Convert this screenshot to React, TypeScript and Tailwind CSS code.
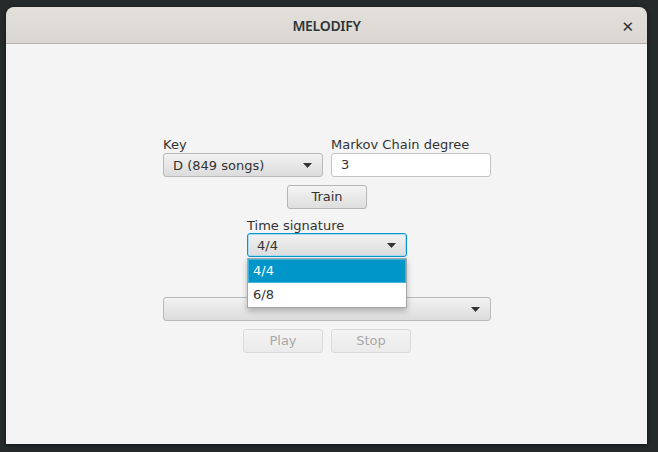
import React from "react";

const font = { fontFamily: '"DejaVu Sans", "Noto Sans", sans-serif' };

function Arrow() {
  return (
    <svg width="9" height="5" viewBox="0 0 9 5" className="shrink-0">
      <path d="M0 0 L9 0 L4.5 5 Z" fill="#333333" />
    </svg>
  );
}

function Combo({ text, width, focused }: { text?: string; width: string; focused?: boolean }) {
  return (
    <div
      className={`${width} h-[24px] flex items-center justify-between pl-[9px] pr-[10px] rounded-[3px] border bg-gradient-to-b from-[#f2f2f2] to-[#dcdcdc] ${
        focused ? "border-[#0596d0] shadow-[inset_0_0_0_1px_#a9dcef]" : "border-[#b9b9b9]"
      }`}
    >
      <span className="text-[13px] text-[#333333] leading-none">{text}</span>
      <Arrow />
    </div>
  );
}

function Button({ text, disabled }: { text: string; disabled?: boolean }) {
  return (
    <div
      className={`w-[80px] h-[24px] flex items-center justify-center rounded-[3px] border border-[#b5b5b5] bg-gradient-to-b from-[#f4f4f4] to-[#dedede] text-[13px] text-[#333333] ${
        disabled ? "opacity-40" : ""
      }`}
    >
      {text}
    </div>
  );
}

export default function App() {
  return (
    <div className="w-[658px] h-[452px] bg-[#252a2b] pt-[7px] pl-[6px]" style={font}>
      <div className="w-[641px] h-[437px] rounded-t-[8px] overflow-hidden flex flex-col shadow-[0_1px_4px_rgba(0,0,0,0.5)]">
        <div className="h-[37px] shrink-0 bg-gradient-to-b from-[#e3e0dc] to-[#dad6d1] border-b border-[#b6b0aa] relative flex items-center justify-center">
          <span className="text-[14px] font-semibold text-[#2e3436] tracking-[-0.3px]" style={{ fontFamily: '"Noto Sans", sans-serif' }}>
            MELODIFY
          </span>
          <span className="absolute right-[13px] top-[9px] text-[15px] font-bold text-[#2e3436]">✕</span>
        </div>
        <div className="flex-1 bg-[#f4f4f4] flex flex-col items-center pt-[93px] pl-[1px]">
          <div className="flex gap-[8px]">
            <div className="w-[160px] flex flex-col">
              <div className="h-[16px] text-[13px] leading-[15px] text-[#333333]">Key</div>
              <Combo text="D (849 songs)" width="w-[160px]" />
            </div>
            <div className="w-[160px] flex flex-col">
              <div className="h-[16px] text-[13px] leading-[15px] text-[#333333]">Markov Chain degree</div>
              <div className="w-[160px] h-[24px] flex items-center pl-[9px] rounded-[3px] border border-[#c4c4c4] bg-white text-[13px] text-[#333333]">
                3
              </div>
            </div>
          </div>
          <div className="mt-[8px]">
            <Button text="Train" />
          </div>
          <div className="mt-[9px] w-[160px] flex flex-col relative">
            <div className="h-[15px] text-[13px] leading-[15px] text-[#333333]">Time signature</div>
            <Combo text="4/4" width="w-[160px]" focused />
            <div className="absolute left-0 top-[40px] w-[160px] bg-white border border-[#a6a6a6] shadow-[0_3px_6px_rgba(0,0,0,0.25)] z-10 p-0">
              <div className="h-[24px] flex items-center px-[4px] bg-[#0096c9] text-white text-[13px] border border-[#3fb0d8]">4/4</div>
              <div className="h-[24px] flex items-center px-[5px] text-[#333333] text-[13px]">6/8</div>
            </div>
          </div>
          <div className="mt-[40px]">
            <Combo width="w-[328px]" />
          </div>
          <div className="mt-[8px] flex gap-[8px]">
            <Button text="Play" disabled />
            <Button text="Stop" disabled />
          </div>
        </div>
      </div>
    </div>
  );
}
